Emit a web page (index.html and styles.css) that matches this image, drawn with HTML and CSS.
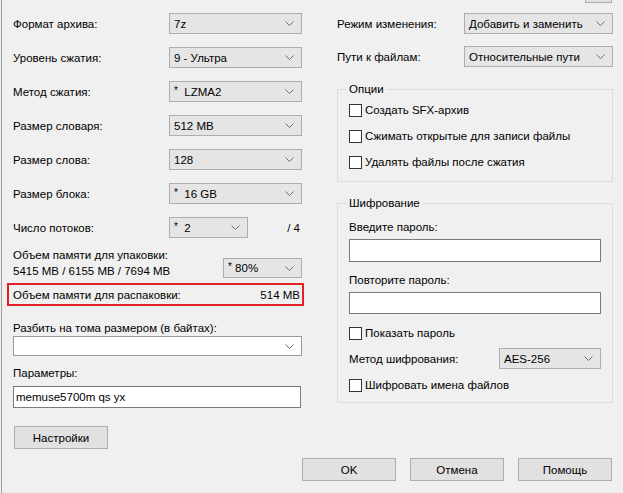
FILE: index.html
```html
<!DOCTYPE html>
<html lang="ru">
<head>
  <meta charset="UTF-8" />
  <title>Добавить к архиву</title>
  <link rel="stylesheet" href="styles.css">
</head>
<body>
  <div class="window">
    <div class="columns">

      <!-- Левая колонка -->
      <div class="left">
        <div class="row">
          <label>Формат архива:</label>
          <div class="combo"><span>7z</span><svg width="9" height="5"><path d="M0.5 0.5 L4.5 4.5 L8.5 0.5" /></svg></div>
        </div>
        <div class="row">
          <label>Уровень сжатия:</label>
          <div class="combo"><span>9 - Ультра</span><svg width="9" height="5"><path d="M0.5 0.5 L4.5 4.5 L8.5 0.5" /></svg></div>
        </div>
        <div class="row">
          <label>Метод сжатия:</label>
          <div class="combo"><span><sup>*</sup>  LZMA2</span><svg width="9" height="5"><path d="M0.5 0.5 L4.5 4.5 L8.5 0.5" /></svg></div>
        </div>
        <div class="row">
          <label>Размер словаря:</label>
          <div class="combo"><span>512 MB</span><svg width="9" height="5"><path d="M0.5 0.5 L4.5 4.5 L8.5 0.5" /></svg></div>
        </div>
        <div class="row">
          <label>Размер слова:</label>
          <div class="combo"><span>128</span><svg width="9" height="5"><path d="M0.5 0.5 L4.5 4.5 L8.5 0.5" /></svg></div>
        </div>
        <div class="row">
          <label>Размер блока:</label>
          <div class="combo"><span><sup>*</sup>  16 GB</span><svg width="9" height="5"><path d="M0.5 0.5 L4.5 4.5 L8.5 0.5" /></svg></div>
        </div>
        <div class="row row-threads">
          <label>Число потоков:</label>
          <div class="combo small"><span><sup>*</sup>  2</span><svg width="9" height="5"><path d="M0.5 0.5 L4.5 4.5 L8.5 0.5" /></svg></div>
          <span class="of">/ 4</span>
        </div>

        <div class="mem">
          <div>Объем памяти для упаковки:<br>5415 MB / 6155 MB / 7694 MB</div>
          <div class="combo small"><span><sup>*</sup> 80%</span><svg width="9" height="5"><path d="M0.5 0.5 L4.5 4.5 L8.5 0.5" /></svg></div>
        </div>

        <div class="unpack">
          <span>Объем памяти для распаковки:</span>
          <span>514 MB</span>
        </div>

        <div class="caption split-caption">Разбить на тома размером (в байтах):</div>
        <div class="combo edit"><span></span><svg width="9" height="5"><path d="M0.5 0.5 L4.5 4.5 L8.5 0.5" /></svg></div>

        <div class="caption params-caption">Параметры:</div>
        <div class="textbox params">memuse5700m qs yx</div>

        <button class="btn settings">Настройки</button>
      </div>

      <!-- Правая колонка -->
      <div class="right">
        <div class="btn browse"></div>
        <div class="row row-right">
          <label>Режим изменения:</label>
          <div class="combo wide"><span>Добавить и заменить</span><svg width="9" height="5"><path d="M0.5 0.5 L4.5 4.5 L8.5 0.5" /></svg></div>
        </div>
        <div class="row row-right">
          <label>Пути к файлам:</label>
          <div class="combo wide"><span>Относительные пути</span><svg width="9" height="5"><path d="M0.5 0.5 L4.5 4.5 L8.5 0.5" /></svg></div>
        </div>

        <fieldset class="group options">
          <legend>Опции</legend>
          <div class="check"><span class="box"></span>Создать SFX-архив</div>
          <div class="check"><span class="box"></span>Сжимать открытые для записи файлы</div>
          <div class="check"><span class="box"></span>Удалять файлы после сжатия</div>
        </fieldset>

        <fieldset class="group crypto">
          <legend>Шифрование</legend>
          <div class="caption">Введите пароль:</div>
          <div class="textbox pass"></div>
          <div class="caption pass2-caption">Повторите пароль:</div>
          <div class="textbox pass pass2"></div>
          <div class="check show-pass"><span class="box"></span>Показать пароль</div>
          <div class="row method">
            <label>Метод шифрования:</label>
            <div class="combo aes"><span>AES-256</span><svg width="9" height="5"><path d="M0.5 0.5 L4.5 4.5 L8.5 0.5" /></svg></div>
          </div>
          <div class="check names"><span class="box"></span>Шифровать имена файлов</div>
        </fieldset>
      </div>
    </div>

    <div class="footer">
      <button class="btn">OK</button>
      <button class="btn">Отмена</button>
      <button class="btn">Помощь</button>
    </div>
  </div>
</body>
</html>
```

FILE: styles.css
```css
/* Базовые стили окна */
* {
  box-sizing: border-box;
  margin: 0;
  padding: 0;
}

body {
  background: #f0f0f0;
  color: #000;
  font-family: "Liberation Sans", Arial, sans-serif;
  font-size: 11.5px;
  line-height: 16px;
  overflow: hidden;
}

.window {
  margin-left: 1px;
  border-left: 1px solid #a0a0a0;
  height: 493px;
}

.columns {
  display: flex;
  padding-top: 13px;
}

.left {
  margin-left: 11px;
  width: 289px;
}

.right {
  margin-left: 35px;
  width: 276px;
}

/* Строки с подписью и списком */
.row {
  display: flex;
  align-items: center;
  height: 21px;
  margin-bottom: 13px;
}

.row label {
  width: 156px;
  flex-shrink: 0;
}

.row-threads {
  margin-bottom: 9px;
}

.of {
  margin-left: auto;
  margin-right: 2px;
}

/* Выпадающие списки */
.combo {
  display: flex;
  align-items: center;
  justify-content: space-between;
  width: 133px;
  height: 21px;
  padding: 0 7px 0 4px;
  background: #e5e5e5;
  border: 1px solid #adadad;
  white-space: pre;
}

.combo svg path {
  fill: none;
  stroke: #6d6d6d;
  stroke-width: 1;
}

.combo sup {
  font-size: 10px;
  line-height: 0;
  vertical-align: 2px;
}

.combo.small {
  width: 79px;
}

.combo.edit {
  width: 289px;
  height: 20px;
  background: #fff;
  border-color: #9a9a9a;
}

/* Память */
.mem {
  display: flex;
  justify-content: space-between;
}

.mem .combo {
  align-self: flex-end;
  margin-bottom: 1px;
  height: 20px;
}

.unpack {
  display: flex;
  justify-content: space-between;
  align-items: center;
  margin: 4px 0 0 -6px;
  width: 297px;
  height: 23px;
  padding: 0 2px 0 4px;
  border: 2px solid #e3202a;
}

.split-caption {
  margin-top: 14px;
}

.params-caption {
  margin-top: 9px;
  margin-bottom: 5px;
}

/* Поля ввода */
.textbox {
  background: #fff;
  border: 1px solid #7a7a7a;
  padding: 0 2px;
  line-height: 20px;
}

.params {
  width: 288px;
  height: 22px;
}

/* Кнопки */
.btn {
  display: block;
  width: 94px;
  height: 23px;
  background: #e1e1e1;
  border: 1px solid #adadad;
  font: inherit;
  color: #000;
}

.settings {
  margin: 18px 0 0 1px;
}

.browse {
  width: 27px;
  margin: -33px 0 10px 248px;
}

.footer {
  display: flex;
  justify-content: flex-end;
  gap: 14px;
  margin-top: 9px;
  padding-right: 11px;
}

/* Правая часть */
.row-right {
  margin-bottom: 12px;
}

.row-right label {
  width: 127px;
}

.combo.wide {
  width: 149px;
}

.group {
  border: 1px solid #dcdcdc;
  padding: 0 11px;
}

.group legend {
  margin-left: -2px;
  padding: 0 2px;
  line-height: 16px;
}

.options {
  margin-top: 14px;
  padding-top: 5px;
  padding-bottom: 11px;
}

.check {
  display: flex;
  align-items: center;
  height: 16px;
  margin-bottom: 10px;
}

.check:last-child {
  margin-bottom: 0;
}

.box {
  width: 13px;
  height: 13px;
  margin-right: 3px;
  background: #fff;
  border: 1px solid #333;
}

.crypto {
  margin-top: 13px;
  padding-top: 8px;
  padding-bottom: 9px;
}

.crypto .caption {
  margin-bottom: 4px;
}

.pass {
  width: 252px;
  height: 23px;
}

.pass2 {
  height: 22px;
}

.pass2-caption {
  margin-top: 10px;
}

.show-pass {
  margin-top: 11px;
  margin-bottom: 7px;
}

.method {
  margin-bottom: 8px;
}

.method label {
  width: 150px;
}

.combo.aes {
  width: 102px;
}
```
